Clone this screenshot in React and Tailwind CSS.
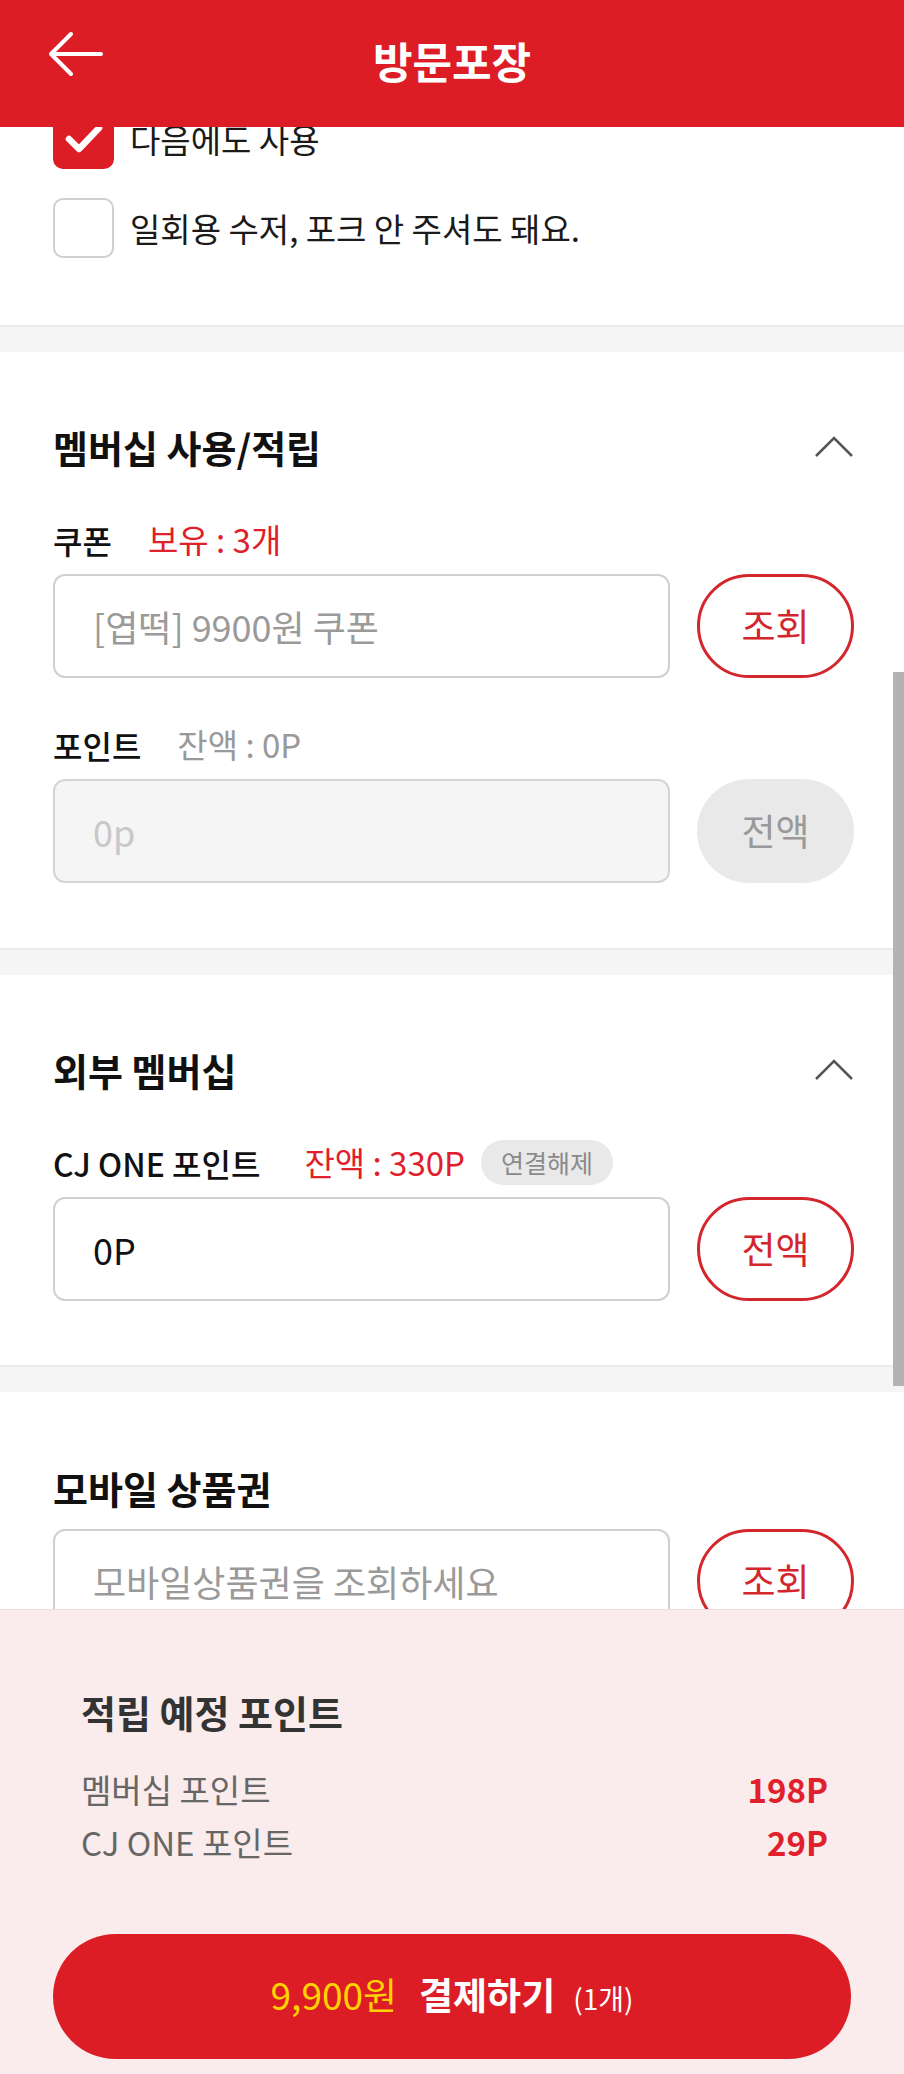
import React from "react";

const ArrowLeft = () => (
  <svg width="56" height="46" viewBox="0 0 56 46" fill="none" className="-mt-[12px]">
    <path d="M3 23 H53 M23 3 L3 23 L23 43" stroke="white" strokeWidth="4" strokeLinecap="round" strokeLinejoin="round" />
  </svg>
);

const ChevronUp = () => (
  <svg width="40" height="24" viewBox="0 0 40 24" fill="none">
    <path d="M2 21 L20 3 L38 21" stroke="#555" strokeWidth="2.5" />
  </svg>
);

const Band = () => <div className="h-[27px] bg-[#f5f5f5] border-t-2 border-[#ebebeb]" />;

const CheckRow = ({ checked, label }) => (
  <div className="flex items-center gap-[16px]">
    {checked ? (
      <div className="w-[61px] h-[60px] rounded-[10px] bg-[#dd1d26] flex items-center justify-center">
        <svg width="40" height="34" viewBox="0 0 40 34" fill="none">
          <path d="M5 17 L15 27 L35 6" stroke="white" strokeWidth="6.5" strokeLinecap="round" strokeLinejoin="round" />
        </svg>
      </div>
    ) : (
      <div className="w-[61px] h-[60px] rounded-[10px] bg-white border-2 border-[#cfcfcf]" />
    )}
    <span className="text-[33px] leading-none text-[#1a1a1a]">{label}</span>
  </div>
);

const FieldRow = ({ value, placeholder, disabled, btn, btnDisabled }) => (
  <div className="flex gap-[27px]">
    <div
      className={
        disabled
          ? "w-[617px] h-[104px] rounded-[12px] border-2 border-[#d4d4d4] bg-[#f5f5f5] flex items-center pl-[38px]"
          : "w-[617px] h-[104px] rounded-[12px] border-2 border-[#d0d0d0] bg-white flex items-center pl-[38px]"
      }
    >
      {value ? (
        <span className="text-[36px] text-[#111]">{value}</span>
      ) : (
        <span className={disabled ? "text-[36px] text-[#c8c8c8]" : "text-[36px] text-[#9a9a9a]"}>{placeholder}</span>
      )}
    </div>
    {btnDisabled ? (
      <button className="w-[157px] h-[104px] rounded-full bg-[#e9e9e9] text-[37px] text-[#999]">{btn}</button>
    ) : (
      <button className="w-[157px] h-[104px] rounded-full border-[3px] border-[#d3262d] bg-white text-[37px] text-[#d3262d]">{btn}</button>
    )}
  </div>
);

const SectionTitle = ({ title, chevron }) => (
  <div className="h-[40px] flex items-center justify-between">
    <h2 className="text-[38px] leading-none font-bold text-[#111]">{title}</h2>
    {chevron && <ChevronUp />}
  </div>
);

export default function App() {
  return (
    <div className="w-[904px] h-[2074px] flex flex-col bg-white overflow-hidden font-['Noto_Sans_CJK_KR',sans-serif]">
      <header className="h-[127px] shrink-0 bg-[#dd1d26] grid grid-cols-[1fr_auto_1fr] items-center pb-[7px] z-10">
        <div className="pl-[48px] flex items-center">
          <ArrowLeft />
        </div>
        <h1 className="text-[43px] leading-none font-bold text-white">방문포장</h1>
        <div />
      </header>

      <div className="relative flex-1 overflow-hidden">
        <div className="-mt-[18px]">
          <section className="pl-[53px] pr-[50px] pb-[67px] flex flex-col gap-[29px]">
            <CheckRow checked label="다음에도 사용" />
            <CheckRow label="일회용 수저, 포크 안 주셔도 돼요." />
          </section>
          <Band />

          <section className="pl-[53px] pr-[50px] pt-[75px] pb-[65px]">
            <SectionTitle title="멤버십 사용/적립" chevron />
            <div className="mt-[50px]">
              <div className="h-[45px] flex items-center gap-[36px] mb-[12px]">
                <span className="text-[32px] font-medium text-[#111]">쿠폰</span>
                <span className="text-[33px] text-[#e0202a]">보유 : 3개</span>
              </div>
              <FieldRow placeholder="[엽떡] 9900원 쿠폰" btn="조회" />
            </div>
            <div className="mt-[44px]">
              <div className="h-[45px] flex items-center gap-[36px] mb-[12px]">
                <span className="text-[32px] font-medium text-[#111]">포인트</span>
                <span className="text-[33px] text-[#999]">잔액 : 0P</span>
              </div>
              <FieldRow placeholder="0p" disabled btn="전액" btnDisabled />
            </div>
          </section>
          <Band />

          <section className="pl-[53px] pr-[50px] pt-[75px] pb-[64px]">
            <SectionTitle title="외부 멤버십" chevron />
            <div className="mt-[50px]">
              <div className="h-[45px] flex items-center mb-[12px]">
                <span className="text-[32px] font-medium text-[#111]">CJ ONE 포인트</span>
                <span className="ml-[44px] text-[33px] text-[#e0202a]">잔액 : 330P</span>
                <span className="ml-[16px] h-[45px] px-[20px] rounded-full bg-[#e9e9e9] flex items-center text-[25px] text-[#8a8a8a]">연결해제</span>
              </div>
              <FieldRow value="0P" btn="전액" />
            </div>
          </section>
          <Band />

          <section className="pl-[53px] pr-[50px] pt-[76px] pb-[60px]">
            <SectionTitle title="모바일 상품권" />
            <div className="mt-[21px]">
              <FieldRow placeholder="모바일상품권을 조회하세요" btn="조회" />
            </div>
          </section>
        </div>
        <div className="absolute right-0 top-[545px] w-[11px] h-[714px] bg-[#b3b3b3]" />
      </div>

      <div className="h-[465px] shrink-0 bg-[#faecec] border-t border-[#eedede] px-[53px] pt-[82px]">
        <div className="pl-[28px] pr-[23px]">
          <div className="h-[40px] flex items-center">
            <h3 className="text-[38px] leading-none font-bold text-[#333]">적립 예정 포인트</h3>
          </div>
          <div className="mt-[38px] h-[40px] flex items-center justify-between">
            <span className="text-[33px] text-[#666]">멤버십 포인트</span>
            <span className="text-[33px] font-bold text-[#e0202a]">198P</span>
          </div>
          <div className="mt-[13px] h-[40px] flex items-center justify-between">
            <span className="text-[33px] text-[#666]">CJ ONE 포인트</span>
            <span className="text-[33px] font-bold text-[#e0202a]">29P</span>
          </div>
        </div>
        <button className="mt-[71px] w-full h-[125px] rounded-full bg-[#dd1d26] flex items-baseline justify-center pt-[42px]">
          <span className="text-[37px] leading-none text-[#ffd200]">9,900원</span>
          <span className="ml-[22px] text-[37px] leading-none font-bold text-white">결제하기</span>
          <span className="ml-[18px] text-[28px] leading-none text-white">(1개)</span>
        </button>
      </div>
    </div>
  );
}
